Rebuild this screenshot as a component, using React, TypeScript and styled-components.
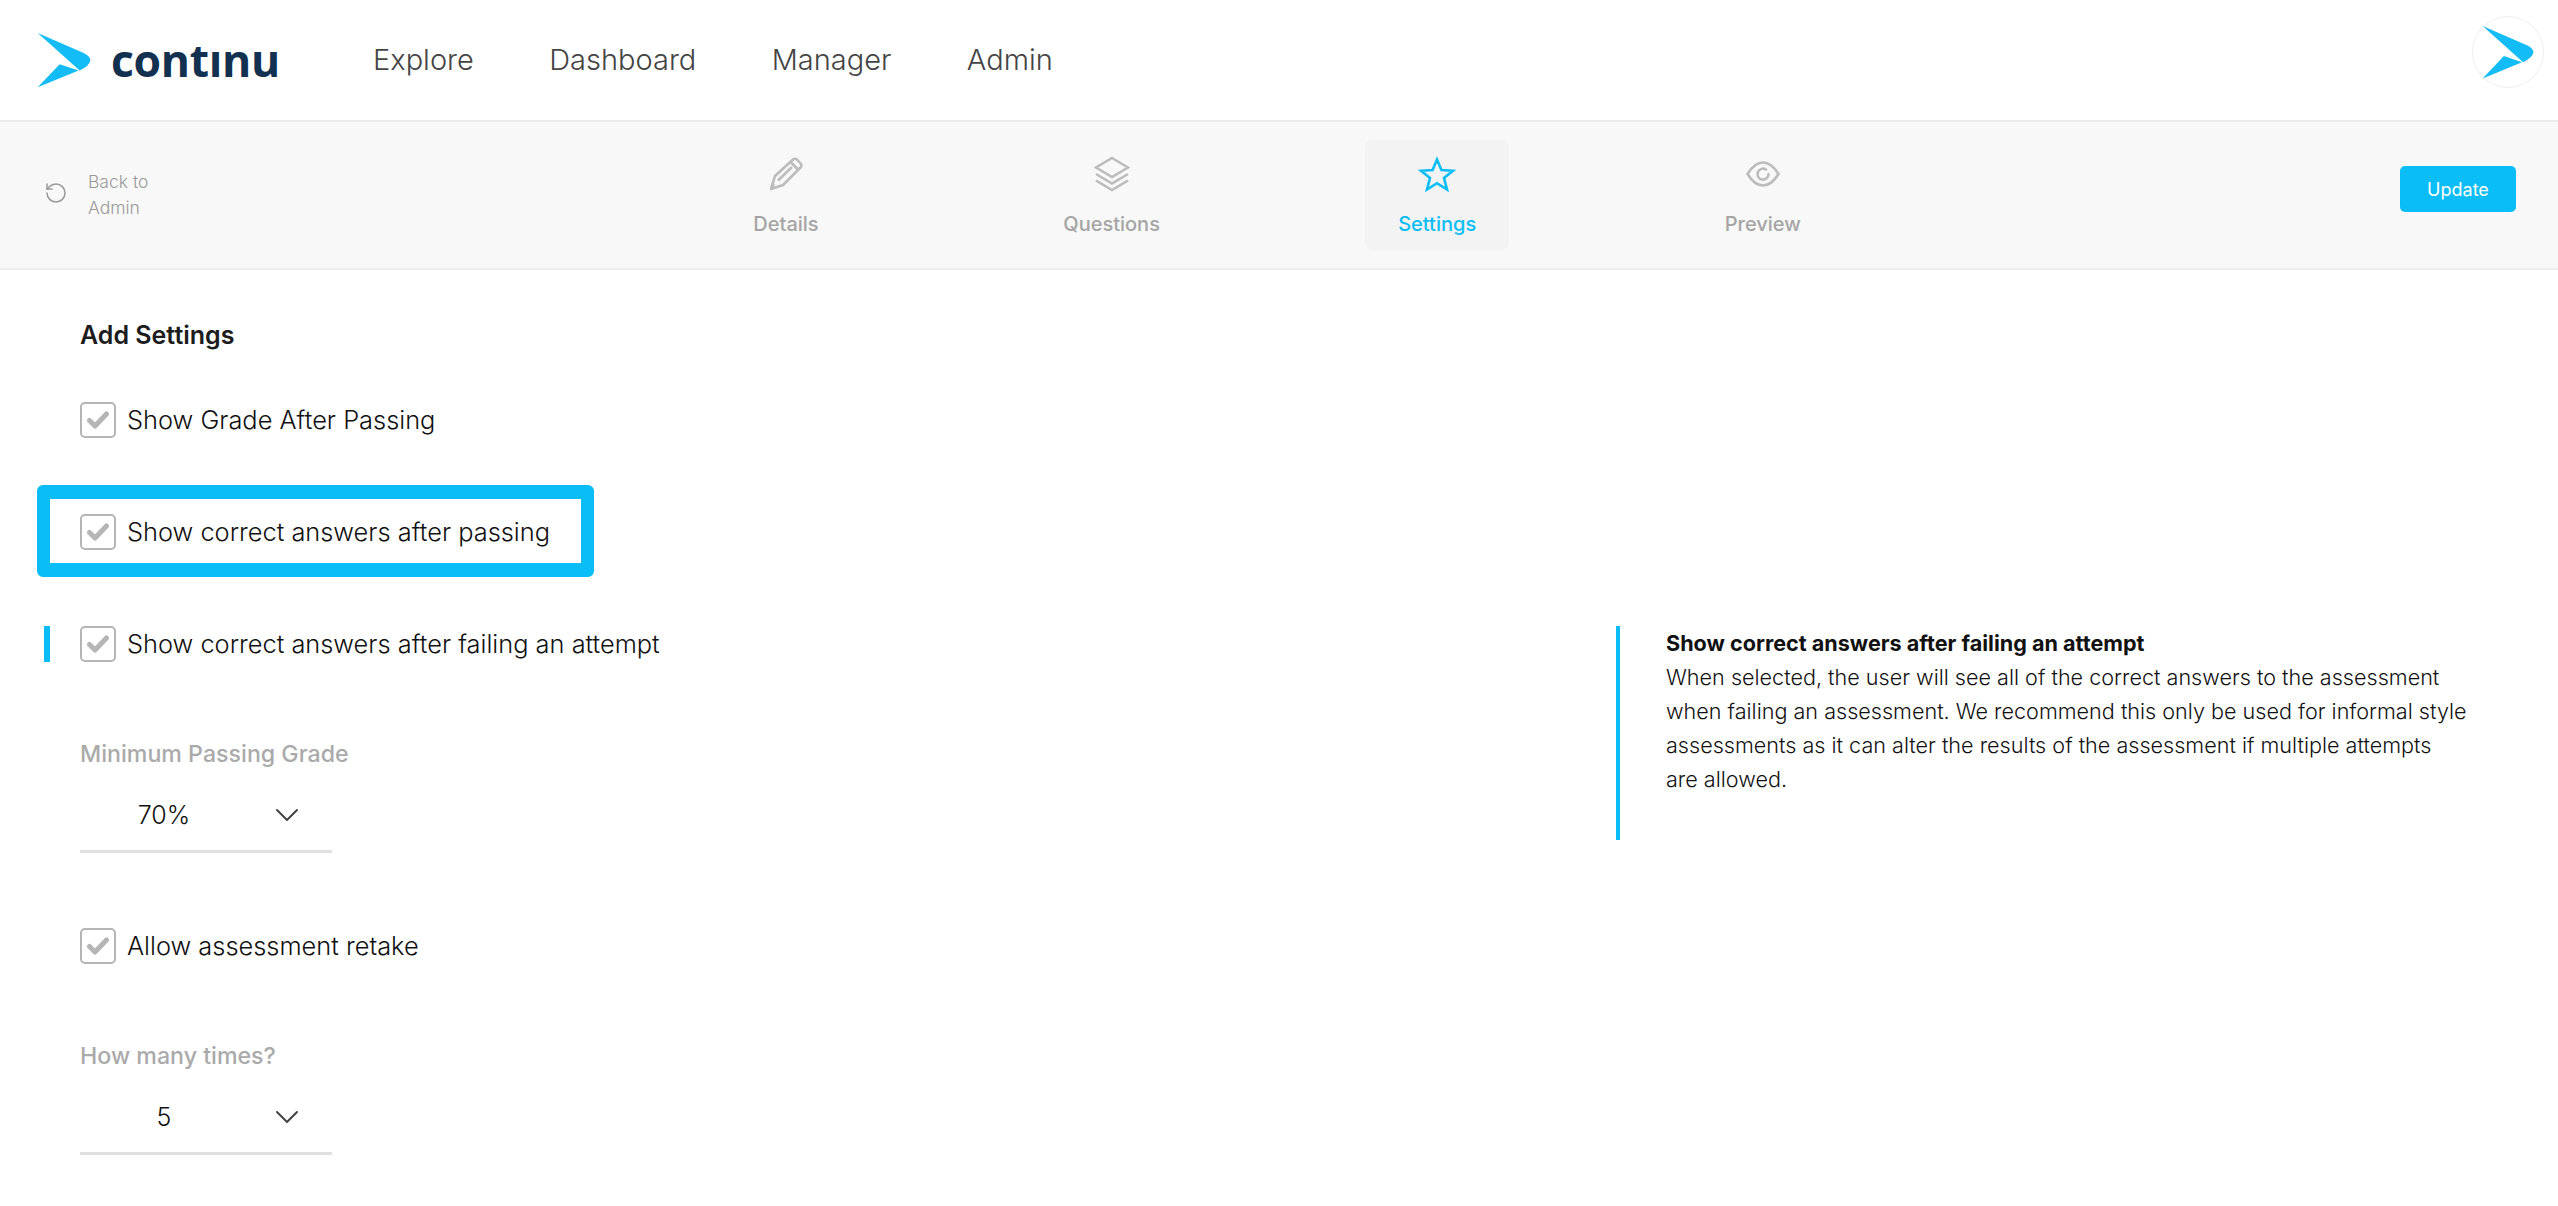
import React from 'react';
import styled, { createGlobalStyle } from 'styled-components';
import { RotateCcw, ChevronDown } from 'lucide-react';

const ACCENT = '#0abdf6';

const GlobalStyle = createGlobalStyle`
  html, body {
    margin: 0;
    padding: 0;
    background: #fff;
  }
  body {
    font-family: Inter, 'Liberation Sans', sans-serif;
    color: #222;
  }
`;

const Page = styled.div`
  width: 2558px;
  height: 1206px;
  overflow: hidden;
  background: #fff;
`;

const Header = styled.header`
  display: flex;
  align-items: center;
  height: 120px;
  box-sizing: content-box;
  border-bottom: 2px solid #ececec;
  padding: 0 14px 0 37px;
`;

const Brand = styled.div`
  display: flex;
  align-items: center;
  gap: 20px;
  width: 336px;
`;

const Wordmark = styled.span`
  font-family: 'Open Sans', sans-serif;
  font-size: 44.5px;
  font-weight: 700;
  line-height: 1;
  letter-spacing: -0.3px;
  color: #12304f;
`;

const Nav = styled.nav`
  display: flex;
  align-items: center;
  gap: 75.4px;
  padding-bottom: 2px;
`;

const NavItem = styled.a`
  font-size: 29px;
  font-weight: 300;
  color: #444;
`;

const Avatar = styled.div`
  margin-left: auto;
  margin-bottom: 16px;
  display: flex;
  align-items: center;
  justify-content: center;
  width: 72px;
  height: 72px;
  box-sizing: border-box;
  border: 1px solid #eee;
  border-radius: 50%;
`;

const Toolbar = styled.div`
  display: flex;
  align-items: center;
  height: 146px;
  box-sizing: content-box;
  border-bottom: 2px solid #ececec;
  background: #f8f8f8;
  padding: 0 42px 0 44px;
`;

const BackLink = styled.a`
  display: flex;
  align-items: center;
  gap: 20px;
  width: 670px;
  color: #999;

  svg {
    margin-bottom: 5px;
  }
`;

const BackText = styled.span`
  font-size: 17.5px;
  font-weight: 300;
  line-height: 26px;
  color: #999;
`;

const Tabs = styled.div`
  display: flex;
  gap: 181.6px;
`;

const Tab = styled.div<{ $active?: boolean }>`
  display: flex;
  flex-direction: column;
  align-items: center;
  justify-content: flex-start;
  width: 144px;
  height: 110px;
  padding-top: 16px;
  box-sizing: border-box;
  border-radius: 8px;
  background: ${(p) => (p.$active ? '#f3f3f3' : 'transparent')};
  color: ${(p) => (p.$active ? ACCENT : '#a5a5a5')};
`;

const TabIcon = styled.div`
  display: flex;
  align-items: center;
  justify-content: center;
  height: 36px;
`;

const TabLabel = styled.span`
  margin-top: 20px;
  font-size: 20px;
  font-weight: 500;
  line-height: 24px;
`;

const UpdateButton = styled.button`
  margin-left: auto;
  margin-bottom: 12px;
  width: 116px;
  height: 46px;
  border: 0;
  border-radius: 5px;
  background: ${ACCENT};
  color: #fff;
  font-family: inherit;
  font-size: 18px;
  font-weight: 400;
`;

const Main = styled.main`
  display: grid;
  grid-template-columns: 1536px 1fr;
  padding: 50px 0 0 80px;
`;

const Column = styled.div`
  display: flex;
  flex-direction: column;
`;

const Title = styled.h2`
  margin: 0 0 52px;
  font-size: 25px;
  font-weight: 600;
  line-height: 30px;
  color: #1c1c1c;
`;

const CheckRow = styled.label<{ $gap?: number }>`
  position: relative;
  display: flex;
  align-items: center;
  gap: 11px;
  height: 36px;
  margin-bottom: ${(p) => p.$gap ?? 77}px;
`;

const Box = styled.span`
  display: flex;
  align-items: center;
  justify-content: center;
  width: 36px;
  height: 36px;
  box-sizing: border-box;
  border: 2px solid #b5b5b5;
  border-radius: 5px;
`;

const RowLabel = styled.span`
  padding-bottom: 2px;
  font-size: 25.4px;
  font-weight: 300;
  color: #111;
`;

const Highlight = styled.span`
  position: absolute;
  left: -43px;
  top: -29px;
  width: 557px;
  height: 92px;
  box-sizing: border-box;
  border: solid ${ACCENT};
  border-width: 14px 13px;
  border-radius: 6px;
`;

const ActiveBar = styled.span`
  position: absolute;
  left: -36px;
  top: 0;
  width: 6px;
  height: 36px;
  background: ${ACCENT};
`;

const FieldLabel = styled.div`
  font-size: 23.2px;
  font-weight: 500;
  line-height: 30px;
  color: #aaa;
`;

const Select = styled.div`
  display: flex;
  align-items: center;
  width: 252px;
  height: 73px;
  margin: 11px 0 75px;
  box-sizing: border-box;
  border-bottom: 3px solid #e0e0e0;
  font-size: 25px;
  font-weight: 300;
  color: #111;
`;

const SelectValue = styled.span`
  width: 168px;
  text-align: center;
`;

const SelectChevron = styled.span`
  display: flex;
  margin-left: 19px;
  color: #444;
`;

const Aside = styled.aside`
  margin-top: 306px;
  width: 866px;
  height: 214px;
  box-sizing: border-box;
  border-left: 4px solid ${ACCENT};
  padding: 0 0 0 46px;
  font-size: 21.6px;
  font-weight: 300;
  line-height: 34px;
  color: #111;
`;

const AsideTitle = styled.div`
  font-weight: 700;
  color: #111;
`;

const Mark = ({ width, height }: { width: number; height: number }) => (
  <svg width={width} height={height} viewBox="50 30 162 174" preserveAspectRatio="none">
    <path d="M52 33 L190 95 Q210 105 210 118 Q208 135 178 150 Z" fill="#14bcf5" />
    <path d="M118 130 L175 150 L52 202 Z" fill="#14bcf5" />
  </svg>
);

const PencilIcon = () => (
  <svg width="34" height="34" viewBox="0 0 34 34" fill="none" stroke="#bcbcbc" strokeWidth="2.6" strokeLinejoin="round">
    <path d="M2 32 L6 19 L24 2.5 Q26 1 28 2.5 L32 7 Q33 9 31.5 10.5 L14 28 Z" />
    <path d="M21.5 5 L29 12.5" />
    <path d="M9 23.5 L23 10" />
    <path d="M2 32 L5 27" />
  </svg>
);

const LayersIcon = () => (
  <svg width="36" height="36" viewBox="0 0 36 36" fill="none" stroke="#bcbcbc" strokeWidth="2.6" strokeLinejoin="miter">
    <path d="M18 2 L34 11.5 L18 21 L2 11.5 Z" />
    <path d="M2 18 L18 27.5 L34 18" />
    <path d="M2 24.5 L18 34 L34 24.5" />
  </svg>
);

const StarIcon = () => (
  <svg width="38" height="36" viewBox="0 0 38 36" fill="none" stroke={ACCENT} strokeWidth="2.6" strokeLinejoin="miter">
    <path d="M19 3.5 L23.4 14 L35 14.8 L26 22 L29 33.5 L19 27.2 L9 33.5 L12 22 L3 14.8 L14.6 14 Z" />
  </svg>
);

const EyeIcon = () => (
  <svg width="34" height="26" viewBox="0 0 34 26" fill="none" stroke="#bcbcbc" strokeWidth="2.6" strokeLinecap="round">
    <path d="M1.5 13 C7 4 12 1.5 17 1.5 C22 1.5 27 4 32.5 13 C27 22 22 24.5 17 24.5 C12 24.5 7 22 1.5 13 Z" />
    <path d="M20 8.5 A5.5 5.5 0 1 0 22.5 13" />
  </svg>
);

const CheckMark = () => (
  <svg width="24" height="20" viewBox="0 0 24 20" fill="none" stroke="#b5b5b5" strokeWidth="5" strokeLinecap="round" strokeLinejoin="round">
    <path d="M3.5 10.5 L9 16 L20.5 4" />
  </svg>
);

const Checkbox = ({ label, gap, children }: { label: string; gap?: number; children?: React.ReactNode }) => (
  <CheckRow $gap={gap}>
    {children}
    <Box>
      <CheckMark />
    </Box>
    <RowLabel>{label}</RowLabel>
  </CheckRow>
);

const Dropdown = ({ value }: { value: string }) => (
  <Select>
    <SelectValue>{value}</SelectValue>
    <SelectChevron>
      <ChevronDown size={40} strokeWidth={1.2} />
    </SelectChevron>
  </Select>
);

const tabs = [
  { label: 'Details', icon: <PencilIcon /> },
  { label: 'Questions', icon: <LayersIcon /> },
  { label: 'Settings', icon: <StarIcon />, active: true },
  { label: 'Preview', icon: <EyeIcon /> },
];

const App: React.FC = () => (
  <Page>
    <GlobalStyle />
    <Header>
      <Brand>
        <Mark width={54} height={56} />
        <Wordmark>contınu</Wordmark>
      </Brand>
      <Nav>
        <NavItem>Explore</NavItem>
        <NavItem>Dashboard</NavItem>
        <NavItem>Manager</NavItem>
        <NavItem>Admin</NavItem>
      </Nav>
      <Avatar>
        <Mark width={52} height={54} />
      </Avatar>
    </Header>
    <Toolbar>
      <BackLink>
        <RotateCcw size={24} strokeWidth={1.5} />
        <BackText>
          Back to
          <br />
          Admin
        </BackText>
      </BackLink>
      <Tabs>
        {tabs.map((t) => (
          <Tab key={t.label} $active={t.active}>
            <TabIcon>{t.icon}</TabIcon>
            <TabLabel>{t.label}</TabLabel>
          </Tab>
        ))}
      </Tabs>
      <UpdateButton>Update</UpdateButton>
    </Toolbar>
    <Main>
      <Column>
        <Title>Add Settings</Title>
        <Checkbox label="Show Grade After Passing" gap={76} />
        <Checkbox label="Show correct answers after passing" gap={76}>
          <Highlight />
        </Checkbox>
        <Checkbox label="Show correct answers after failing an attempt">
          <ActiveBar />
        </Checkbox>
        <FieldLabel>Minimum Passing Grade</FieldLabel>
        <Dropdown value="70%" />
        <Checkbox label="Allow assessment retake" />
        <FieldLabel>How many times?</FieldLabel>
        <Dropdown value="5" />
      </Column>
      <Aside>
        <AsideTitle>Show correct answers after failing an attempt</AsideTitle>
        When selected, the user will see all of the correct answers to the assessment
        <br />
        when failing an assessment. We recommend this only be used for informal style
        <br />
        assessments as it can alter the results of the assessment if multiple attempts
        <br />
        are allowed.
      </Aside>
    </Main>
  </Page>
);

export default App;
